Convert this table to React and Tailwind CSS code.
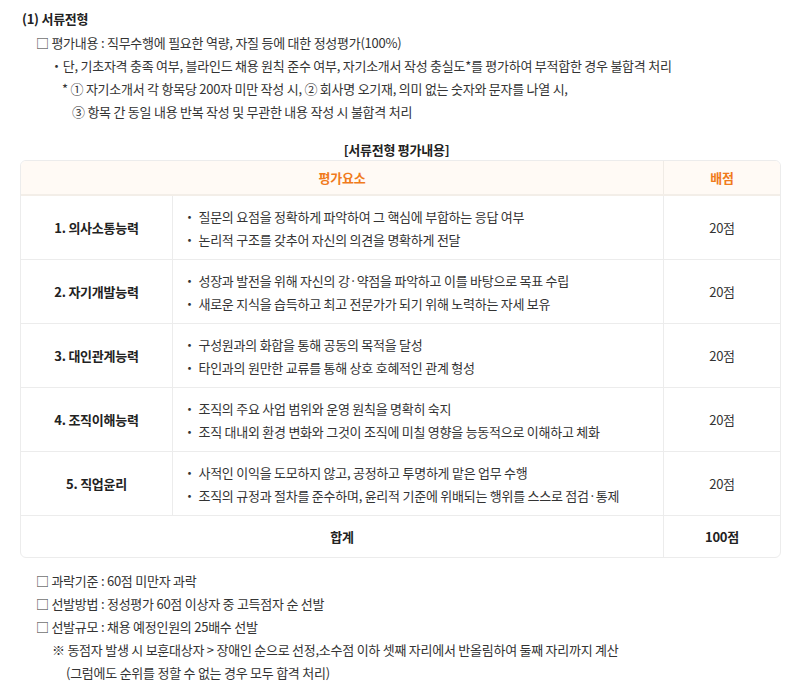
import React from "react";

const rows = [
  ["1. 의사소통능력", ["질문의 요점을 정확하게 파악하여 그 핵심에 부합하는 응답 여부", "논리적 구조를 갖추어 자신의 의견을 명확하게 전달"]],
  ["2. 자기개발능력", ["성장과 발전을 위해 자신의 강·약점을 파악하고 이를 바탕으로 목표 수립", "새로운 지식을 습득하고 최고 전문가가 되기 위해 노력하는 자세 보유"]],
  ["3. 대인관계능력", ["구성원과의 화합을 통해 공동의 목적을 달성", "타인과의 원만한 교류를 통해 상호 호혜적인 관계 형성"]],
  ["4. 조직이해능력", ["조직의 주요 사업 범위와 운영 원칙을 명확히 숙지", "조직 대내외 환경 변화와 그것이 조직에 미칠 영향을 능동적으로 이해하고 체화"]],
  ["5. 직업윤리", ["사적인 이익을 도모하지 않고, 공정하고 투명하게 맡은 업무 수행", "조직의 규정과 절차를 준수하며, 윤리적 기준에 위배되는 행위를 스스로 점검·통제"]],
];

export default function App() {
  return (
    <div
      className="bg-white text-[#333] text-[13px] leading-[23px] tracking-[-0.25px] pt-[7px] pb-4"
      style={{ fontFamily: '"Noto Sans CJK KR", "Noto Sans", sans-serif' }}
    >
      <div className="pl-[22px] font-bold text-[#222]">(1) 서류전형</div>
      <div className="pl-[36px] mt-[1px]">□ 평가내용 : 직무수행에 필요한 역량, 자질 등에 대한 정성평가(100%)</div>
      <div className="pl-[50px]">・단, 기초자격 충족 여부, 블라인드 채용 원칙 준수 여부, 자기소개서 작성 충실도*를 평가하여 부적합한 경우 불합격 처리</div>
      <div className="pl-[62px]">* ① 자기소개서 각 항목당 200자 미만 작성 시, ② 회사명 오기재, 의미 없는 숫자와 문자를 나열 시,</div>
      <div className="pl-[72px]">③ 항목 간 동일 내용 반복 작성 및 무관한 내용 작성 시 불합격 처리</div>

      <div className="text-center font-bold text-[#222] mt-[15px] -mb-px">[서류전형 평가내용]</div>

      <div className="mx-[20px] w-[761px] border border-[#ececec] rounded-[6px] overflow-hidden">
        <div className="grid grid-cols-[152px_1fr_116px] bg-[#fffaf5] border-b-2 border-[#f3eee8] h-[35px] items-stretch">
          <div className="col-span-2 flex items-center justify-center font-bold text-[#f07b1c] border-r border-[#f0ebe5]">평가요소</div>
          <div className="flex items-center justify-center font-bold text-[#f07b1c]">배점</div>
        </div>
        {rows.map(([name, items], i) => (
          <div key={i} className="grid grid-cols-[152px_1fr_116px] h-[64px] border-b border-[#ececec]">
            <div className="flex items-center justify-center font-bold text-[#222] border-r border-[#ececec]">{name}</div>
            <div className="flex flex-col justify-center pl-[10px] border-r border-[#ececec]">
              {items.map((t, j) => (
                <div key={j}>・ {t}</div>
              ))}
            </div>
            <div className="flex items-center justify-center">20점</div>
          </div>
        ))}
        <div className="grid grid-cols-[1fr_116px] h-[41px]">
          <div className="flex items-center justify-center font-bold text-[#222] border-r border-[#ececec]">합계</div>
          <div className="flex items-center justify-center font-bold text-[#222]">100점</div>
        </div>
      </div>

      <div className="mt-[11px]">
        <div className="pl-[36px]">□ 과락기준 : 60점 미만자 과락</div>
        <div className="pl-[36px]">□ 선발방법 : 정성평가 60점 이상자 중 고득점자 순 선발</div>
        <div className="pl-[36px]">□ 선발규모 : 채용 예정인원의 25배수 선발</div>
        <div className="pl-[52px]">※ 동점자 발생 시 보훈대상자 &gt; 장애인 순으로 선정,소수점 이하 셋째 자리에서 반올림하여 둘째 자리까지 계산</div>
        <div className="pl-[66px]">(그럼에도 순위를 정할 수 없는 경우 모두 합격 처리)</div>
      </div>
    </div>
  );
}
